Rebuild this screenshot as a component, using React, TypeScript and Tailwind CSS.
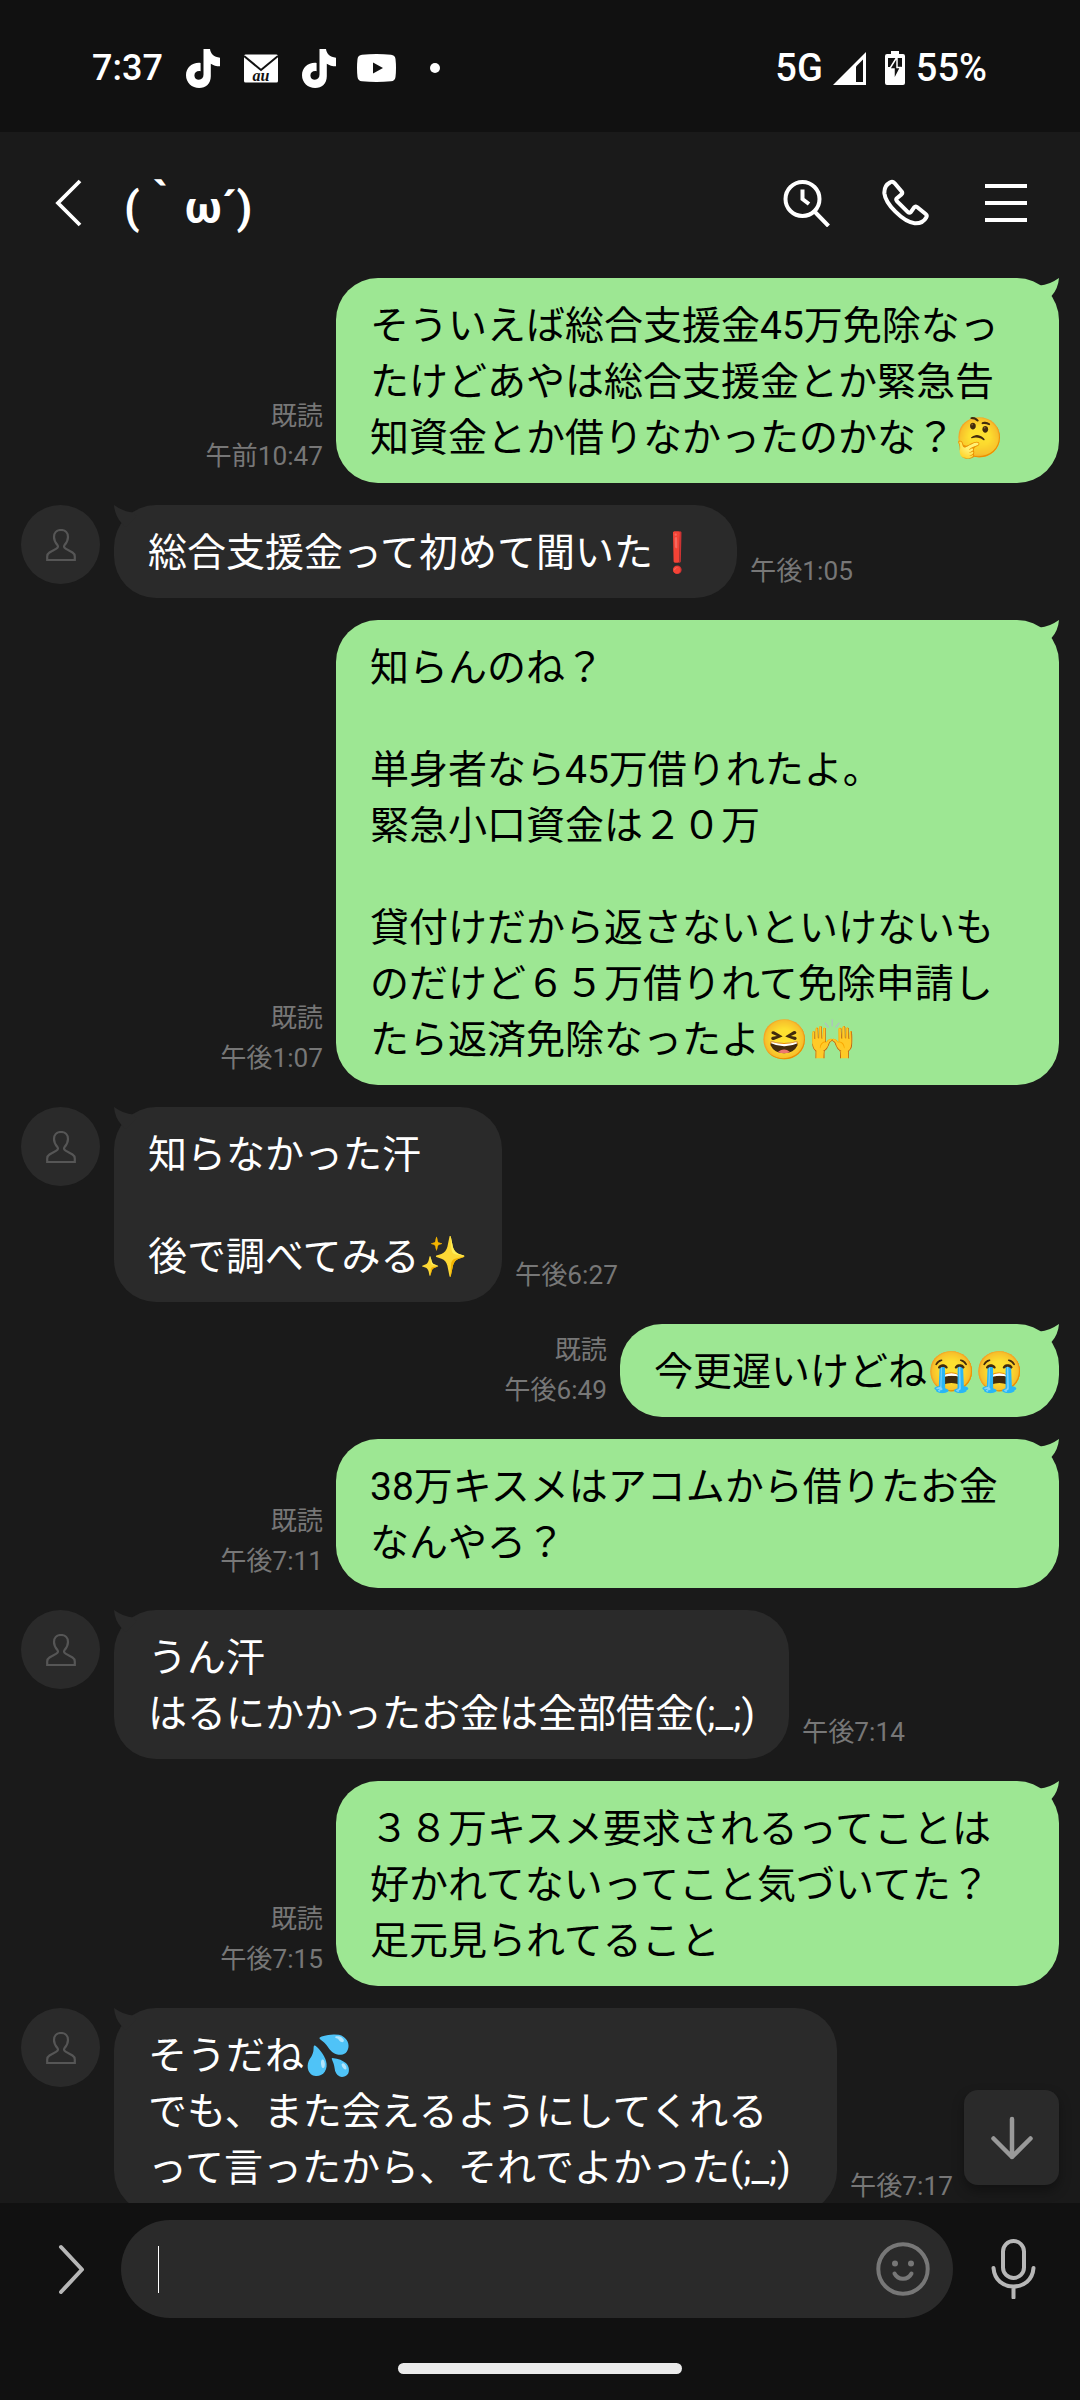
import React from 'react';

type Message = {
  mine?: boolean;
  width: string;
  time: string;
  lines: string[];
};

const MESSAGES: Message[] = [
  {
    mine: true,
    width: 'w-[723px]',
    time: '午前10:47',
    lines: ['そういえば総合支援金45万免除なっ', 'たけどあやは総合支援金とか緊急告', '知資金とか借りなかったのかな？🤔'],
  },
  { width: 'w-[623px]', time: '午後1:05', lines: ['総合支援金って初めて聞いた❗'] },
  {
    mine: true,
    width: 'w-[723px]',
    time: '午後1:07',
    lines: [
      '知らんのね？',
      '',
      '単身者なら45万借りれたよ。',
      '緊急小口資金は２０万',
      '',
      '貸付けだから返さないといけないも',
      'のだけど６５万借りれて免除申請し',
      'たら返済免除なったよ😆🙌',
    ],
  },
  { width: 'w-[388px]', time: '午後6:27', lines: ['知らなかった汗', '', '後で調べてみる✨'] },
  { mine: true, width: 'w-[439px]', time: '午後6:49', lines: ['今更遅いけどね😭😭'] },
  { mine: true, width: 'w-[723px]', time: '午後7:11', lines: ['38万キスメはアコムから借りたお金', 'なんやろ？'] },
  { width: 'w-[675px]', time: '午後7:14', lines: ['うん汗', 'はるにかかったお金は全部借金(;_;)'] },
  {
    mine: true,
    width: 'w-[723px]',
    time: '午後7:15',
    lines: ['３８万キスメ要求されるってことは', '好かれてないってこと気づいてた？', '足元見られてること'],
  },
  {
    width: 'w-[723px]',
    time: '午後7:17',
    lines: ['そうだね💦', 'でも、また会えるようにしてくれる', 'って言ったから、それでよかった(;_;)'],
  },
];

function TikTok() {
  return (
    <svg width="34" height="39" viewBox="0 0 34 39" fill="#fff">
      <path d="M17.5 0H24c.6 4.700 4 8.200 10 8.700v8.600c-3.600 0-6.800-.9-9.200-2.600v12.500C24.800 34.500 19.800 39 13.200 39 5.900 39 0 33.500 0 26.200c0-7.600 6.500-13.200 14.600-12.300v8.300c-3.500-.7-6.200 1.200-6.200 4.200 0 2.500 2 4.400 4.500 4.400 2.800 0 4.600-2 4.600-5.200Z" />
    </svg>
  );
}

function StatusBar() {
  return (
    <div className="flex h-[132px] shrink-0 items-center bg-[#111111] pt-1 pr-[93px] pl-[92px] text-[36px] font-medium text-white">
      <span className="w-[94px]">7:37</span>
      <TikTok />
      <svg className="ml-6" width="34" height="29" viewBox="0 0 34 29">
        <rect y="0.500" width="34" height="28" rx="1.500" fill="#fff" />
        <path d="M0 2 17 16 34 2" fill="none" stroke="#111" strokeWidth="2" />
        <text x="17" y="26.500" textAnchor="middle" fontSize="16" fontStyle="italic" fontWeight="700" fontFamily="Liberation Serif, serif" fill="#111">
          au
        </text>
      </svg>
      <span className="ml-6">
        <TikTok />
      </span>
      <svg className="ml-[21px]" width="39" height="28" viewBox="0 0 39 28">
        <path d="M5 .7Q19.500-.7 34 .7 38 1 38.500 5q1 9 0 18-.5 4-4.500 4.300-14.500 1.400-29 0Q1 27 .5 23-.5 14 .5 5 1 1 5 .7Z" fill="#fff" />
        <path d="m16 8.500 10 5.500-10 5.500Z" fill="#111" />
      </svg>
      <span className="ml-[34px] size-[10px] rounded-full bg-white" />
      <div className="ml-auto flex items-center text-[38px]">
        <span>5G</span>
        <svg className="ml-[10px]" width="33" height="33" viewBox="0 0 33 33">
          <path d="M33 0v33H0Z" fill="#fff" />
          <path d="M23 14.500 30 7.500V30h-7Z" fill="#111" />
        </svg>
        <svg className="ml-[19px]" width="20" height="34" viewBox="0 0 20 34">
          <path d="M6 0h8v3h4a2 2 0 0 1 2 2v27a2 2 0 0 1-2 2H2a2 2 0 0 1-2-2V5a2 2 0 0 1 2-2h4Z" fill="#fff" />
          <path d="M3 7h14v9H3Z" fill="#111" />
          <path d="M12 6 4.500 18H9v11l6.500-12.500H12Z" fill="#111" stroke="#fff" strokeWidth="1.500" />
        </svg>
        <span className="ml-[11px]">55%</span>
      </div>
    </div>
  );
}

function Header() {
  return (
    <header className="flex h-[146px] shrink-0 items-start pt-[47px] pr-[53px] pl-[55px] text-white">
      <svg width="27" height="48" viewBox="0 0 27 48" fill="none" stroke="#fff" strokeWidth="3.800">
        <path d="M25 2 3 24l22 22" />
      </svg>
      <h1 className="ml-[42px] text-[45px] leading-[58px] font-bold whitespace-pre">(｀ω´)</h1>
      <div className="ml-auto flex items-start">
        <svg width="48" height="48" viewBox="0 0 48 48" fill="none" stroke="#fff" strokeWidth="4">
          <circle cx="19.500" cy="20" r="17" />
          <path d="M19.500 10.500V20l6.500 5M31.500 32.500 45.500 47" />
        </svg>
        <svg className="ml-[51px]" width="48" height="48" viewBox="0 0 50 50" fill="none" stroke="#fff" strokeWidth="4.200" strokeLinejoin="round">
          <path d="M8.500 3.500Q11 2 13 4.200L20.500 13q1.200 1.600-.2 3L15.500 20q-1.300 1.300 0 3L27 34.500q1.600 1.500 3 0l3.500-5q1.300-1.500 3-.3L45.500 36.500q1.800 1.500.6 3.500Q42.500 46.500 34 46 25 45 14 34 3.500 23.500 2.500 15 2 7 8.500 3.500Z" />
        </svg>
        <svg className="ml-[55px]" width="42" height="48" viewBox="0 0 42 48" stroke="#fff" strokeWidth="4">
          <path d="M0 7h42M0 24h42M0 41h42" />
        </svg>
      </div>
    </header>
  );
}

function Avatar() {
  return (
    <div className="mr-[14px] flex size-[79px] shrink-0 items-center justify-center self-start rounded-full bg-[#2a2a2a]">
      <svg width="30" height="32" viewBox="0 0 30 32" fill="none" stroke="#565656" strokeWidth="2.200">
        <path d="M15 1C10.500 1 8 4 8 8c0 3.500 1.200 5.500 3.400 8 1 1.500.6 2.800-1 3.600L3.500 23.500Q1.200 25 1.200 27.500V31h27.600v-3.500q0-2.500-2.300-4L19.600 19.600c-1.600-.8-2-2.100-1-3.600C20.800 13.500 22 11.500 22 8c0-4-2.500-7-7-7Z" />
      </svg>
    </div>
  );
}

function Bubble({ message }: { message: Message }) {
  const { mine, lines, width } = message;
  return (
    <div
      className={`relative shrink-0 rounded-[42px] pt-5 pb-[17px] pl-[34px] text-[39px] leading-[56px] whitespace-nowrap ${width} ${
        mine ? 'bg-[#9de793] text-black' : 'bg-[#2a2a2a] text-white'
      }`}
    >
      <svg
        className={mine ? 'absolute top-0 right-0' : 'absolute top-0 left-0 -scale-x-100'}
        width="24"
        height="24"
        viewBox="0 0 24 24"
        fill={mine ? '#9de793' : '#2a2a2a'}
      >
        <path d="M5 7.500Q14 7 24 0q-.8 10.500-7.500 18L12 22 1 11Z" />
      </svg>
      {lines.map((line, i) => (
        <p key={i} className={line ? 'h-14' : 'h-[46px]'}>
          {line}
        </p>
      ))}
    </div>
  );
}

function Row({ message }: { message: Message }) {
  return (
    <div className={`flex items-end ${message.mine ? 'flex-row-reverse pr-[21px]' : 'pl-[21px]'}`}>
      {!message.mine && <Avatar />}
      <Bubble message={message} />
      <div className="mx-[13px] mb-[7px] text-right text-[26.2px] leading-10 text-[#777777]">
        {message.mine && <p>既読</p>}
        <p>{message.time}</p>
      </div>
    </div>
  );
}

function InputBar() {
  return (
    <div className="flex h-[197px] shrink-0 flex-col items-center bg-[#111111] pt-[17px]">
      <div className="flex w-full items-center pr-[43px] pl-[57px]">
        <svg width="28" height="50" viewBox="0 0 28 50" fill="none" stroke="#b7b7b7" strokeWidth="4" strokeLinecap="round" strokeLinejoin="round">
          <path d="M4 3 25 25.500 4 48" />
        </svg>
        <div className="ml-9 flex h-[98px] w-[832px] items-center justify-between rounded-full bg-[#2a2a2a] pr-[23px] pl-[37px]">
          <span className="h-[47px] w-px bg-white" />
          <svg width="54" height="54" viewBox="0 0 54 54" fill="none" stroke="#777" strokeWidth="4" strokeLinecap="round">
            <circle cx="27" cy="27" r="24.700" />
            <circle cx="19" cy="21.500" r="3" fill="#777" stroke="none" />
            <circle cx="35" cy="21.500" r="3" fill="#777" stroke="none" />
            <path d="M18.500 31.500c3.500 7 13.500 7 17 0" />
          </svg>
        </div>
        <svg className="ml-[38px]" width="46" height="60" viewBox="0 0 46 60" fill="none" stroke="#b7b7b7" strokeWidth="4" strokeLinecap="round">
          <rect x="12" y="2" width="21" height="37" rx="10.500" />
          <path d="M2.500 29c1 12 9.500 18.500 20 18.500S41.500 41 42.500 29M22.500 48v10.500" />
        </svg>
      </div>
      <div className="mt-[45px] h-[11px] w-[284px] rounded-full bg-[#ebebeb]" />
    </div>
  );
}

export default function App() {
  return (
    <div className="flex h-[2400px] w-[1080px] flex-col overflow-hidden bg-[#1a1a1a] font-['Roboto','Noto_Sans_CJK_JP','Noto_Color_Emoji',sans-serif]" lang="ja">
      <StatusBar />
      <Header />
      <main className="relative flex min-h-0 flex-1 flex-col gap-[22px] overflow-hidden">
        {MESSAGES.map((message) => (
          <Row key={message.time} message={message} />
        ))}
        <button className="absolute right-[21px] bottom-[18px] flex size-[95px] items-center justify-center rounded-[14px] bg-[#2a2a2a] shadow-[0_6px_12px_rgba(0,0,0,0.35)]">
          <svg width="44" height="44" viewBox="0 0 44 44" fill="none" stroke="#999" strokeWidth="4.500" strokeLinecap="round" strokeLinejoin="round">
            <path d="M22 3v38M3.500 22.500 22 41l18.500-18.500" />
          </svg>
        </button>
      </main>
      <InputBar />
    </div>
  );
}
